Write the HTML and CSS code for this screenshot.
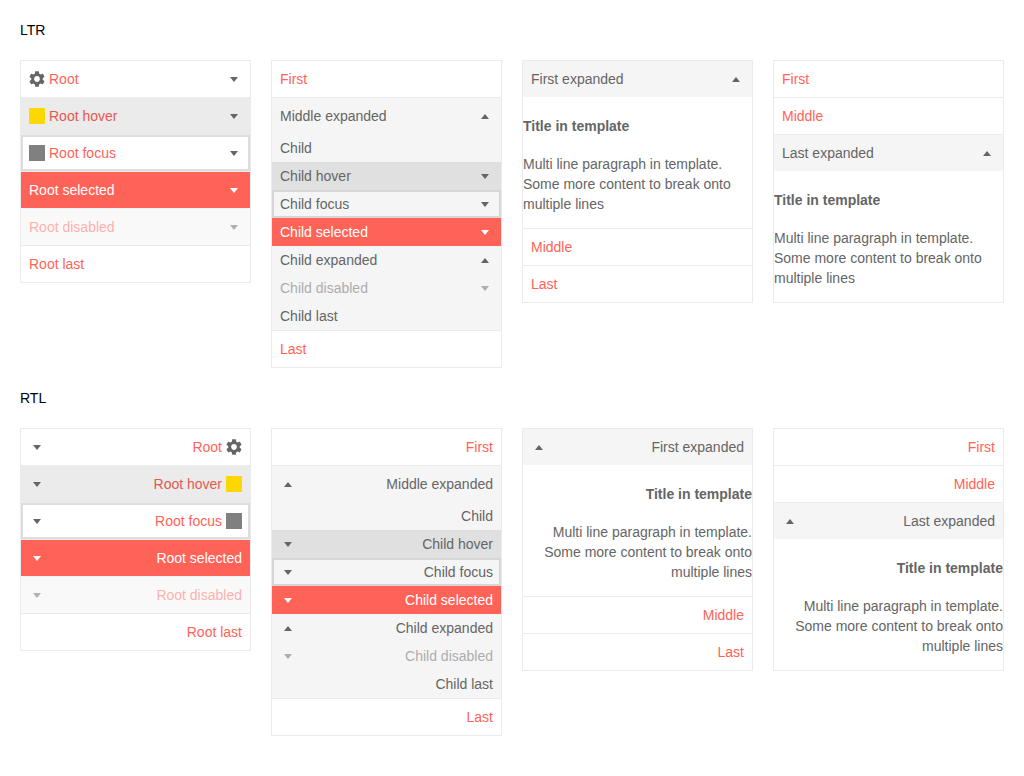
FILE: index.html
```html
<!DOCTYPE html>
<html>
<head>
    <title>PanelBar</title>
    <link rel="stylesheet" href="styles.css">
</head>
<body>
<svg class="defs" width="0" height="0">
    <symbol id="gear" viewBox="2 2 20 20">
        <path d="M19.14 12.94c.04-.3.06-.61.06-.94 0-.32-.02-.64-.07-.94l2.03-1.58c.18-.14.23-.41.12-.61l-1.92-3.32c-.12-.22-.37-.29-.59-.22l-2.39.96c-.5-.38-1.03-.7-1.62-.94l-.36-2.54c-.04-.24-.24-.41-.48-.41h-3.84c-.24 0-.43.17-.47.41l-.36 2.54c-.59.24-1.13.57-1.62.94l-2.39-.96c-.22-.08-.47 0-.59.22L2.74 8.87c-.12.21-.08.47.12.61l2.03 1.58c-.05.3-.09.63-.09.94s.02.64.07.94l-2.03 1.58c-.18.14-.23.41-.12.61l1.92 3.32c.12.22.37.29.59.22l2.39-.96c.5.38 1.03.7 1.62.94l.36 2.54c.05.24.24.41.48.41h3.84c.24 0 .44-.17.47-.41l.36-2.54c.59-.24 1.13-.56 1.62-.94l2.39.96c.22.08.47 0 .59-.22l1.92-3.32c.12-.22.07-.47-.12-.61l-2.01-1.58zM12 15.6c-1.98 0-3.6-1.62-3.6-3.6s1.62-3.6 3.6-3.6 3.6 1.62 3.6 3.6-1.62 3.6-3.6 3.6z"/>
    </symbol>
</svg>

<section class="demo">
    <h5 class="demo-title">LTR</h5>
    <div class="panels">
        <ul class="panelbar">
            <li class="item"><div class="link"><svg class="gear"><use href="#gear"/></svg>Root<span class="arrow down"></span></div></li>
            <li class="item"><div class="link hover"><span class="swatch yellow"></span>Root hover<span class="arrow down"></span></div></li>
            <li class="item"><div class="link focus"><span class="swatch gray"></span>Root focus<span class="arrow down"></span></div></li>
            <li class="item"><div class="link selected">Root selected<span class="arrow down"></span></div></li>
            <li class="item disabled"><div class="link">Root disabled<span class="arrow down"></span></div></li>
            <li class="item"><div class="link">Root last</div></li>
        </ul>

        <ul class="panelbar">
            <li class="item"><div class="link">First</div></li>
            <li class="item">
                <div class="link expanded">Middle expanded<span class="arrow up"></span></div>
                <ul class="group">
                    <li><div class="child">Child</div></li>
                    <li><div class="child hover">Child hover<span class="arrow down"></span></div></li>
                    <li><div class="child focus">Child focus<span class="arrow down"></span></div></li>
                    <li><div class="child selected">Child selected<span class="arrow down"></span></div></li>
                    <li><div class="child">Child expanded<span class="arrow up"></span></div></li>
                    <li class="disabled"><div class="child">Child disabled<span class="arrow down"></span></div></li>
                    <li><div class="child">Child last</div></li>
                </ul>
            </li>
            <li class="item"><div class="link">Last</div></li>
        </ul>

        <ul class="panelbar">
            <li class="item">
                <div class="link expanded">First expanded<span class="arrow up"></span></div>
                <div class="content">
                    <h4>Title in template</h4>
                    <p>Multi line paragraph in template. Some more content to break onto multiple lines</p>
                </div>
            </li>
            <li class="item"><div class="link">Middle</div></li>
            <li class="item"><div class="link">Last</div></li>
        </ul>

        <ul class="panelbar">
            <li class="item"><div class="link">First</div></li>
            <li class="item"><div class="link">Middle</div></li>
            <li class="item">
                <div class="link expanded">Last expanded<span class="arrow up"></span></div>
                <div class="content">
                    <h4>Title in template</h4>
                    <p>Multi line paragraph in template. Some more content to break onto multiple lines</p>
                </div>
            </li>
        </ul>
    </div>
</section>

<section class="demo">
    <h5 class="demo-title">RTL</h5>
    <div class="panels">
        <ul class="panelbar" dir="rtl">
            <li class="item"><div class="link"><svg class="gear"><use href="#gear"/></svg>Root<span class="arrow down"></span></div></li>
            <li class="item"><div class="link hover"><span class="swatch yellow"></span>Root hover<span class="arrow down"></span></div></li>
            <li class="item"><div class="link focus"><span class="swatch gray"></span>Root focus<span class="arrow down"></span></div></li>
            <li class="item"><div class="link selected">Root selected<span class="arrow down"></span></div></li>
            <li class="item disabled"><div class="link">Root disabled<span class="arrow down"></span></div></li>
            <li class="item"><div class="link">Root last</div></li>
        </ul>

        <ul class="panelbar" dir="rtl">
            <li class="item"><div class="link">First</div></li>
            <li class="item">
                <div class="link expanded">Middle expanded<span class="arrow up"></span></div>
                <ul class="group">
                    <li><div class="child">Child</div></li>
                    <li><div class="child hover">Child hover<span class="arrow down"></span></div></li>
                    <li><div class="child focus">Child focus<span class="arrow down"></span></div></li>
                    <li><div class="child selected">Child selected<span class="arrow down"></span></div></li>
                    <li><div class="child">Child expanded<span class="arrow up"></span></div></li>
                    <li class="disabled"><div class="child">Child disabled<span class="arrow down"></span></div></li>
                    <li><div class="child">Child last</div></li>
                </ul>
            </li>
            <li class="item"><div class="link">Last</div></li>
        </ul>

        <ul class="panelbar" dir="rtl">
            <li class="item">
                <div class="link expanded">First expanded<span class="arrow up"></span></div>
                <div class="content">
                    <h4>Title in template</h4>
                    <p>Multi line paragraph in template. Some more content to break onto multiple lines</p>
                </div>
            </li>
            <li class="item"><div class="link">Middle</div></li>
            <li class="item"><div class="link">Last</div></li>
        </ul>

        <ul class="panelbar" dir="rtl">
            <li class="item"><div class="link">First</div></li>
            <li class="item"><div class="link">Middle</div></li>
            <li class="item">
                <div class="link expanded">Last expanded<span class="arrow up"></span></div>
                <div class="content">
                    <h4>Title in template</h4>
                    <p>Multi line paragraph in template. Some more content to break onto multiple lines</p>
                </div>
            </li>
        </ul>
    </div>
</section>
</body>
</html>
```

FILE: styles.css
```css
body {
    margin: 0;
    padding: 20px;
    background-color: #fff;
    font-family: "Liberation Sans", Arial, sans-serif;
    font-size: 14px;
    line-height: 20px;
    color: #656565;
}

.defs {
    position: absolute;
}

.demo {
    margin-bottom: 20px;
}

.demo-title {
    margin: 0 0 20px;
    font-size: 14px;
    font-weight: normal;
    color: #000;
}

.panels {
    display: grid;
    grid-template-columns: repeat(4, 1fr);
    gap: 20px;
    align-items: start;
}

.panelbar {
    margin: 0;
    padding: 0;
    list-style: none;
    border: 1px solid #ebebeb;
    background-color: #fff;
}

.item + .item {
    border-top: 1px solid #ebebeb;
}

.link,
.child {
    display: flex;
    align-items: center;
    padding: 8px;
    color: #ff6358;
}

.link.expanded {
    background-color: #f5f5f5;
    color: #656565;
}

.link.hover {
    background-color: #ebebeb;
    color: #e5584f;
}

.link.focus {
    box-shadow: inset 0 0 0 2px #dedede;
}

.link.selected,
.child.selected {
    background-color: #ff6358;
    color: #fff;
}

.group {
    margin: 0;
    padding: 0;
    list-style: none;
    background-color: #f5f5f5;
}

.child {
    padding: 4px 8px;
    color: #656565;
}

.child.hover {
    background-color: #e0e0e0;
}

.child.focus {
    box-shadow: inset 0 0 0 2px #d6d6d6;
}

.disabled {
    opacity: 0.5;
}

.item.disabled {
    background-color: #f5f5f5;
}

.gear,
.swatch {
    flex: none;
    width: 16px;
    height: 16px;
    margin-inline-end: 4px;
}

.gear {
    fill: #656565;
}

.swatch.yellow {
    background-color: gold;
}

.swatch.gray {
    background-color: gray;
}

.arrow {
    display: flex;
    align-items: center;
    justify-content: center;
    flex: none;
    width: 16px;
    height: 16px;
    margin-inline-start: auto;
}

.arrow::before {
    content: "";
    border-left: 4px solid transparent;
    border-right: 4px solid transparent;
}

.arrow.down::before {
    border-top: 5px solid currentColor;
}

.arrow.up::before {
    border-bottom: 5px solid currentColor;
}

.link .arrow,
.child .arrow {
    color: #656565;
}

.link.selected .arrow,
.child.selected .arrow {
    color: #fff;
}

.content {
    overflow: hidden;
}

.content h4 {
    margin: 18.62px 0;
    font-size: 14px;
}

.content p {
    margin: 14px 0;
}
```
